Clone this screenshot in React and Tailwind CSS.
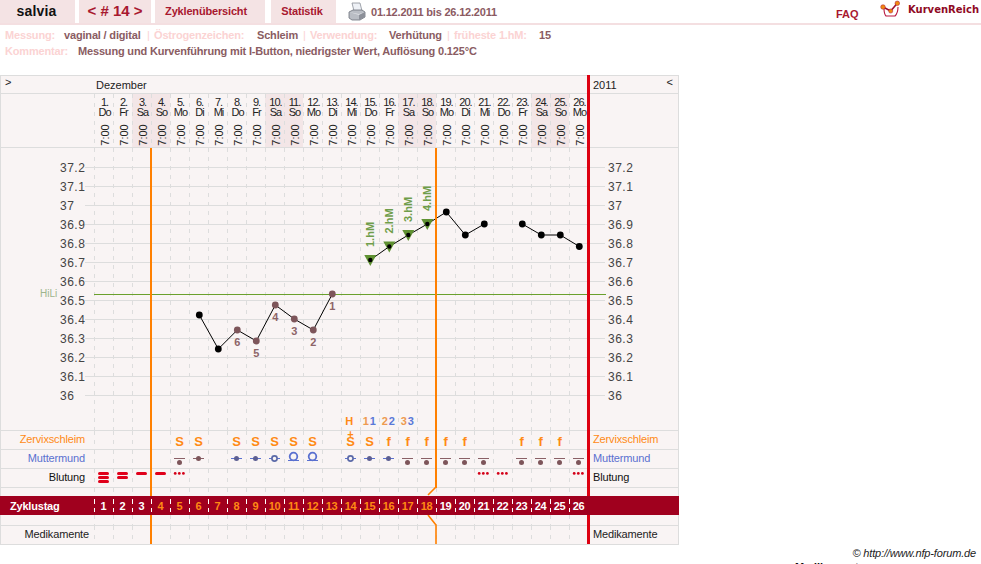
import React from "react";

const DAYS = [
  ["1.", "Do"], ["2.", "Fr"], ["3.", "Sa"], ["4.", "So"], ["5.", "Mo"], ["6.", "Di"], ["7.", "Mi"],
  ["8.", "Do"], ["9.", "Fr"], ["10.", "Sa"], ["11.", "So"], ["12.", "Mo"], ["13.", "Di"], ["14.", "Mi"],
  ["15.", "Do"], ["16.", "Fr"], ["17.", "Sa"], ["18.", "So"], ["19.", "Mo"], ["20.", "Di"], ["21.", "Mi"],
  ["22.", "Do"], ["23.", "Fr"], ["24.", "Sa"], ["25.", "So"], ["26.", "Mo"],
];

const TEMPS = ["37.2", "37.1", "37", "36.9", "36.8", "36.7", "36.6", "36.5", "36.4", "36.3", "36.2", "36.1", "36"];

const dayX = (d) => 94.8 + 19 * (d - 0.5);

const LOW_POINTS = [
  [6, 315, "k"], [7, 349, "k"], [8, 330, "b", "6"], [9, 341, "b", "5"], [10, 305, "b", "4"],
  [11, 319, "b", "3"], [12, 330, "b", "2"], [13, 294, "b", "1"],
];
const HIGH_POINTS = [
  [15, 260, "1.hM"], [16, 246.5, "2.hM"], [17, 235, "3.hM"], [18, 224, "4.hM"], [19, 212],
  [20, 235], [21, 224],
];
const LATE_POINTS = [[23, 224], [24, 235], [25, 235], [26, 246.5]];

const LABEL_Y = { 6: 342, 5: 353, 4: 317, 3: 331, 2: 342, 1: 306 };

const dash = "bg-[image:repeating-linear-gradient(to_bottom,#dddddd_0,#dddddd_4px,transparent_4px,transparent_9px)] bg-[length:1px_100%] bg-no-repeat";
const dashWhite = "bg-[image:repeating-linear-gradient(to_bottom,transparent_0,transparent_3px,#ffffff_3px,#ffffff_7.5px,transparent_7.5px,transparent_9px)] bg-[length:1px_100%] bg-no-repeat";

function Cells({ render }) {
  return (
    <div className="flex">
      {DAYS.map((_, i) => (
        <div key={i} className={`w-[19px] h-full flex items-center justify-center ${dash}`}>
          {render ? render(i + 1) : null}
        </div>
      ))}
    </div>
  );
}

function Row({ label, color, render }) {
  return (
    <div className="flex h-[19px] border-b border-[#dddddd] text-[11px] tracking-[-0.15px]">
      <div className={`w-[93px] pr-[9px] text-right leading-[16px] ${color}`}>{label}</div>
      <Cells render={render} />
      <div className={`flex-1 pl-[5px] leading-[16px] ${color}`}>{label}</div>
    </div>
  );
}

function Zervix({ d }) {
  const s = [5, 6, 8, 9, 10, 11, 12, 14, 15];
  const f = [16, 17, 18, 19, 20, 23, 24, 25];
  if (!s.includes(d) && !f.includes(d)) return null;
  return (
    <span className="relative pt-[3px] text-[13px] font-bold leading-[18px] text-[#ff8a14]">
      {d === 14 && <span className="absolute -top-[1px] left-1/2 -translate-x-1/2 text-[11px] leading-[11px]">+</span>}
      {s.includes(d) ? "S" : "f"}
    </span>
  );
}

function Muttermund({ d }) {
  const low = [5, 17, 18, 19, 20, 21, 23, 24, 25, 26];
  const blue = "#5a70d0";
  const brown = "#8a6066";
  let art = null;
  if (low.includes(d)) {
    art = (
      <>
        <line x1="3" x2="14" y1="8.5" y2="8.5" stroke={brown} />
        <circle cx="8.5" cy="12.5" r="2.5" fill="#7d555a" />
      </>
    );
  } else if (d === 6) {
    art = (
      <>
        <line x1="3" x2="14" y1="8.5" y2="8.5" stroke={brown} />
        <circle cx="8.5" cy="8.5" r="2.5" fill="#7d555a" />
      </>
    );
  } else if ([8, 9, 15, 16].includes(d)) {
    art = (
      <>
        <line x1="3" x2="14" y1="8.5" y2="8.5" stroke={blue} />
        <circle cx="8.5" cy="8.5" r="2.5" fill="#5d5f92" />
      </>
    );
  } else if (d === 10 || d === 14) {
    art = (
      <>
        <line x1="3" x2="14" y1="8.5" y2="8.5" stroke={blue} />
        <circle cx="8.5" cy="8.5" r="2.6" fill="#f9f4f4" stroke="#5c6aa8" strokeWidth="1.7" />
      </>
    );
  } else if (d === 11 || d === 12) {
    art = (
      <>
        <line x1="3" x2="14" y1="10.5" y2="10.5" stroke={blue} />
        <circle cx="8.5" cy="6.5" r="3.8" fill="#f9f4f4" stroke={blue} strokeWidth="1.8" />
      </>
    );
  }
  if (!art) return null;
  return (
    <svg width="18" height="18" className="ml-[1px]">
      {art}
    </svg>
  );
}

function Blutung({ d }) {
  const bars = { 1: 3, 2: 2, 3: 1, 4: 1 }[d];
  if (bars) {
    return (
      <svg width="18" height="18" className="ml-[1px]">
        {Array.from({ length: bars }).map((_, i) => (
          <rect key={i} x="3" y={3 + i * 4} width="11" height="3" rx="1.5" fill="#e0001a" />
        ))}
      </svg>
    );
  }
  if ([5, 21, 22, 26].includes(d)) {
    return (
      <svg width="18" height="18" className="ml-[1px]">
        {[4.2, 8.3, 12.4].map((x) => (
          <circle key={x} cx={x} cy="4.4" r="1.4" fill="#d40018" />
        ))}
      </svg>
    );
  }
  return null;
}

function Chart() {
  const line = (pts) => pts.map((p) => `${dayX(p[0])},${p[1]}`).join(" ");
  return (
    <svg width="677" height="282" viewBox="1 148 677 282" className="block" style={{ fontFamily: "'Liberation Sans', Arial, sans-serif" }}>
      {TEMPS.map((t, i) => (
        <g key={t}>
          <line x1="85" x2="605" y1={167.5 + i * 19} y2={167.5 + i * 19} stroke="#dddddd" />
          <text x="60" y={171.5 + i * 19} fontSize="12" letterSpacing="0.5" fill="#444444">{t}</text>
          <text x="608" y={171.5 + i * 19} fontSize="12" letterSpacing="0.5" fill="#444444">{t}</text>
        </g>
      ))}
      {DAYS.map((_, i) => (
        <line key={i} x1={94.5 + i * 19} x2={94.5 + i * 19} y1="148" y2="430" stroke="#dddddd" strokeDasharray="4 5" />
      ))}
      <line x1="94" x2="606" y1="294.5" y2="294.5" stroke="#6aa02c" />
      <text x="40" y="297" fontSize="10" fill="#9db58c">HiLi</text>

      <polyline points={line(LOW_POINTS)} fill="none" stroke="#000000" />
      <polyline points={line(HIGH_POINTS)} fill="none" stroke="#000000" />
      <polyline points={line(LATE_POINTS)} fill="none" stroke="#000000" />

      {LOW_POINTS.map(([d, y, kind, n]) => (
        <g key={d}>
          <circle cx={dayX(d)} cy={y} r="3.4" fill={kind === "k" ? "#000000" : "#7d555a"} />
          {n && (
            <text x={dayX(d)} y={LABEL_Y[n] + 4} textAnchor="middle" fontSize="11" fontWeight="bold" fill="#8d6468">{n}</text>
          )}
        </g>
      ))}
      {HIGH_POINTS.map(([d, y, hm]) =>
        hm ? (
          <g key={d}>
            <polygon points={`${dayX(d) - 6},${y - 5} ${dayX(d) + 6},${y - 5} ${dayX(d)},${y + 6}`} fill="#5f9132" />
            <circle cx={dayX(d)} cy={y} r="2.2" fill="#000000" />
            <text transform={`translate(${dayX(d) + 4},${y - 13}) rotate(-90)`} fontSize="11" fontWeight="bold" fill="#6f9d4a">{hm}</text>
          </g>
        ) : (
          <circle key={d} cx={dayX(d)} cy={y} r="3.4" fill="#000000" />
        )
      )}
      {LATE_POINTS.map(([d, y]) => (
        <circle key={d} cx={dayX(d)} cy={y} r="3.4" fill="#000000" />
      ))}

      <text x={dayX(14) - 2} y="425" textAnchor="middle" fontSize="11" fontWeight="bold" fill="#ff8a14">H</text>
      {[[15, "1"], [16, "2"], [17, "3"]].map(([d, n]) => (
        <g key={d} fontSize="11" fontWeight="bold">
          <text x={dayX(d) - 4.5} y="425" textAnchor="middle" fill="#ee9a50">{n}</text>
          <text x={dayX(d) + 2.5} y="425" textAnchor="middle" fill="#5a78d8">{n}</text>
        </g>
      ))}
    </svg>
  );
}

function PrinterIcon() {
  return (
    <svg width="18" height="20" viewBox="0 0 18 20">
      <path d="M4 1h8l2 8H6z" fill="#eef1f6" stroke="#8a8f98" strokeWidth="0.8" />
      <path d="M1 10l4-2h9l3 2v5l-5 3H4l-3-2z" fill="#b9bdc4" stroke="#6d727b" strokeWidth="0.8" />
      <path d="M1 10l10 2 6-2-6 3z" fill="#dfe1e5" />
      <path d="M11 13v5l6-3v-5z" fill="#8c9099" />
    </svg>
  );
}

function LogoIcon() {
  return (
    <svg width="20" height="20" viewBox="0 0 20 20">
      <path d="M4 8c0 3 0 6 2 8h9c2-2 3-6 3-9" fill="none" stroke="#b8173f" strokeWidth="1.1" />
      <path d="M3 7l7.7 4 6.6-7.7" fill="none" stroke="#9c1030" strokeWidth="1.6" />
      <circle cx="3" cy="7" r="2.3" fill="#f08a10" stroke="#a8123a" strokeWidth="0.5" />
      <circle cx="10.7" cy="11" r="2.1" fill="#f08a10" stroke="#a8123a" strokeWidth="0.5" />
      <circle cx="17.3" cy="3.3" r="2.3" fill="#f08a10" stroke="#a8123a" strokeWidth="0.5" />
    </svg>
  );
}

export default function App() {
  return (
    <div className="relative h-[564px] w-[981px] overflow-hidden bg-white text-[#222222]" style={{ fontFamily: "'Liberation Sans', Arial, sans-serif" }}>
      {/* Top bar */}
      <div className="flex h-[25px] items-start border-b-2 border-[#f4dfe1]">
        <div className="flex h-[23px] w-[75px] shrink-0 items-center justify-center bg-[#f4e3e4] pr-[2px] text-[14px] font-bold tracking-[0.2px] text-[#111111]">salvia</div>
        <div className="ml-[4px] flex h-[23px] w-[72px] shrink-0 items-center justify-center whitespace-pre bg-[#f4e3e4] text-[15px] font-bold text-[#a8182f]">&lt; # 14 &gt;</div>
        <div className="ml-[4px] flex h-[23px] w-[110px] shrink-0 items-center justify-center bg-[#f4e3e4] pr-[8px] text-[11px] font-bold tracking-[-0.17px] text-[#a8182f]">Zyklenübersicht</div>
        <div className="ml-[6px] flex h-[23px] w-[65px] shrink-0 items-center justify-center bg-[#f4e3e4] pr-[3px] text-[11px] font-bold tracking-[-0.17px] text-[#a8182f]">Statistik</div>
        <div className="ml-[12px] mt-[2px] shrink-0"><PrinterIcon /></div>
        <div className="ml-[5px] whitespace-nowrap text-[11px] font-bold leading-[24px] tracking-[-0.2px] text-[#8b5a62]">01.12.2011 bis 26.12.2011</div>
        <div className="ml-auto flex w-[145px] shrink-0">
          <div className="mt-[6px] w-[21px] whitespace-nowrap text-[11px] font-bold leading-[16px] text-[#a8182f]">FAQ</div>
          <div className="ml-[23px] shrink-0"><LogoIcon /></div>
          <div className="ml-[8px] mt-[3px] whitespace-nowrap text-[10px] font-bold leading-[14px] text-[#8f0a24]" style={{ fontFamily: "'DejaVu Sans', sans-serif" }}>KurvenReich</div>
        </div>
      </div>

      {/* Info lines */}
      <div className="mt-[2px] pl-[5px] text-[11px] font-bold leading-[16px] tracking-[-0.17px] text-[#8a5c62]">
        <div className="flex whitespace-pre">
          <span className="w-[59px] text-[#fbd3d3]">Messung:</span>
          <span className="w-[83px]">vaginal / digital</span>
          <span className="w-[7px] font-normal text-[#fbd3d3]">|</span>
          <span className="w-[103px] text-[#fbd3d3]">Östrogenzeichen:</span>
          <span className="w-[46px]">Schleim</span>
          <span className="w-[7px] font-normal text-[#fbd3d3]">|</span>
          <span className="w-[79px] text-[#fbd3d3]">Verwendung:</span>
          <span className="w-[58px]">Verhütung</span>
          <span className="w-[7px] font-normal text-[#fbd3d3]">|</span>
          <span className="w-[85px] text-[#fbd3d3]">früheste 1.hM:</span>
          <span>15</span>
        </div>
        <div className="flex whitespace-pre">
          <span className="w-[73px] text-[#fbd3d3]">Kommentar:</span>
          <span>Messung und Kurvenführung mit I-Button, niedrigster Wert, Auflösung 0.125°C</span>
        </div>
      </div>

      {/* Chart table */}
      <div className="relative mt-[16px] w-[679px] border border-[#dddddd] bg-[#f9f4f4] text-[11px]">
        {/* month row */}
        <div className="flex h-[18px] border-b border-[#dddddd] leading-[18px]">
          <div className="w-[95px] pl-[4px] leading-[13px]">&gt;</div>
          <div className="w-[492px]">Dezember</div>
          <div className="flex flex-1 justify-between pl-[5px] pr-[5px]">
            <span>2011</span>
            <span className="leading-[13px]">&lt;</span>
          </div>
        </div>
        {/* date row */}
        <div className="flex h-[54px] border-b border-[#dddddd]">
          <div className="w-[93px]" />
          <div className="flex">
            {DAYS.map(([n, w], i) => (
              <div key={i} className={`flex h-[53px] w-[19px] flex-col items-center pl-[2px] text-[11px] leading-[10px] tracking-[-1px] text-[#222222] ${dash} ${w === "Sa" || w === "So" ? "bg-[#f3e6e7]" : ""}`}>
                <span className="mt-[3px]">{n}</span>
                <span>{w}</span>
                <span className="mt-[13px] -rotate-90 whitespace-nowrap tracking-[0px]">7:00</span>
              </div>
            ))}
          </div>
        </div>
        {/* temperature chart */}
        <div className="h-[282px]">
          <Chart />
        </div>
        <div className="border-t border-[#dddddd]">
          <Row label="Zervixschleim" color="text-[#ff8a14]" render={(d) => <Zervix d={d} />} />
          <Row label="Muttermund" color="text-[#5a70d0]" render={(d) => <Muttermund d={d} />} />
          <Row label="Blutung" color="text-[#111111]" render={(d) => <Blutung d={d} />} />
        </div>
        {/* cycle day band */}
        <div className="flex h-[8px] pl-[93px]"><Cells /></div>
        <div className="relative z-10 -mx-[1px] flex h-[19px] bg-[#a0001e] text-[11px] font-bold leading-[20px]">
          <div className="w-[94px] pl-[10px] tracking-[-0.2px] text-white">Zyklustag</div>
          <div className="flex">
            {DAYS.map((_, i) => (
              <div key={i} className={`w-[19px] text-center tracking-[-0.3px] ${dashWhite} ${i >= 3 && i <= 17 ? "text-[#ff8a14]" : "text-white"}`}>{i + 1}</div>
            ))}
          </div>
        </div>
        <div className="flex h-[11px] border-b border-[#dddddd] pl-[93px]"><Cells /></div>
        <div className="flex h-[18px] text-[11px] leading-[16px] tracking-[-0.15px]">
          <div className="w-[93px] whitespace-nowrap pr-[5px] text-right">Medikamente</div>
          <Cells />
          <div className="flex-1 pl-[5px]">Medikamente</div>
        </div>

        {/* phase lines over the table */}
        <div className="absolute left-[149px] top-[72px] h-[396px] w-[2px] bg-[#ff8000]" />
        <div className="absolute left-[434px] top-[72px] h-[340px] w-[2px] bg-[#ff8000]" />
        <svg className="absolute left-[425px] top-[411px]" width="14" height="57">
          <path d="M10 0 L2 8 M2 28 L10 38 V57" fill="none" stroke="#ff8000" strokeWidth="1.6" />
        </svg>
        <div className="absolute left-[586px] -top-[1px] h-[469px] w-[3px] bg-[#dd0011]" />
      </div>

      <div className="absolute right-[5px] top-[546px] whitespace-nowrap text-[11px] italic leading-[14px] tracking-[-0.15px] text-[#222222]">© http://www.nfp-forum.de</div>
      <div className="absolute left-[795px] top-[560px] text-[11px] font-bold leading-[14px] text-[#111111]">Medikamente</div>
    </div>
  );
}
